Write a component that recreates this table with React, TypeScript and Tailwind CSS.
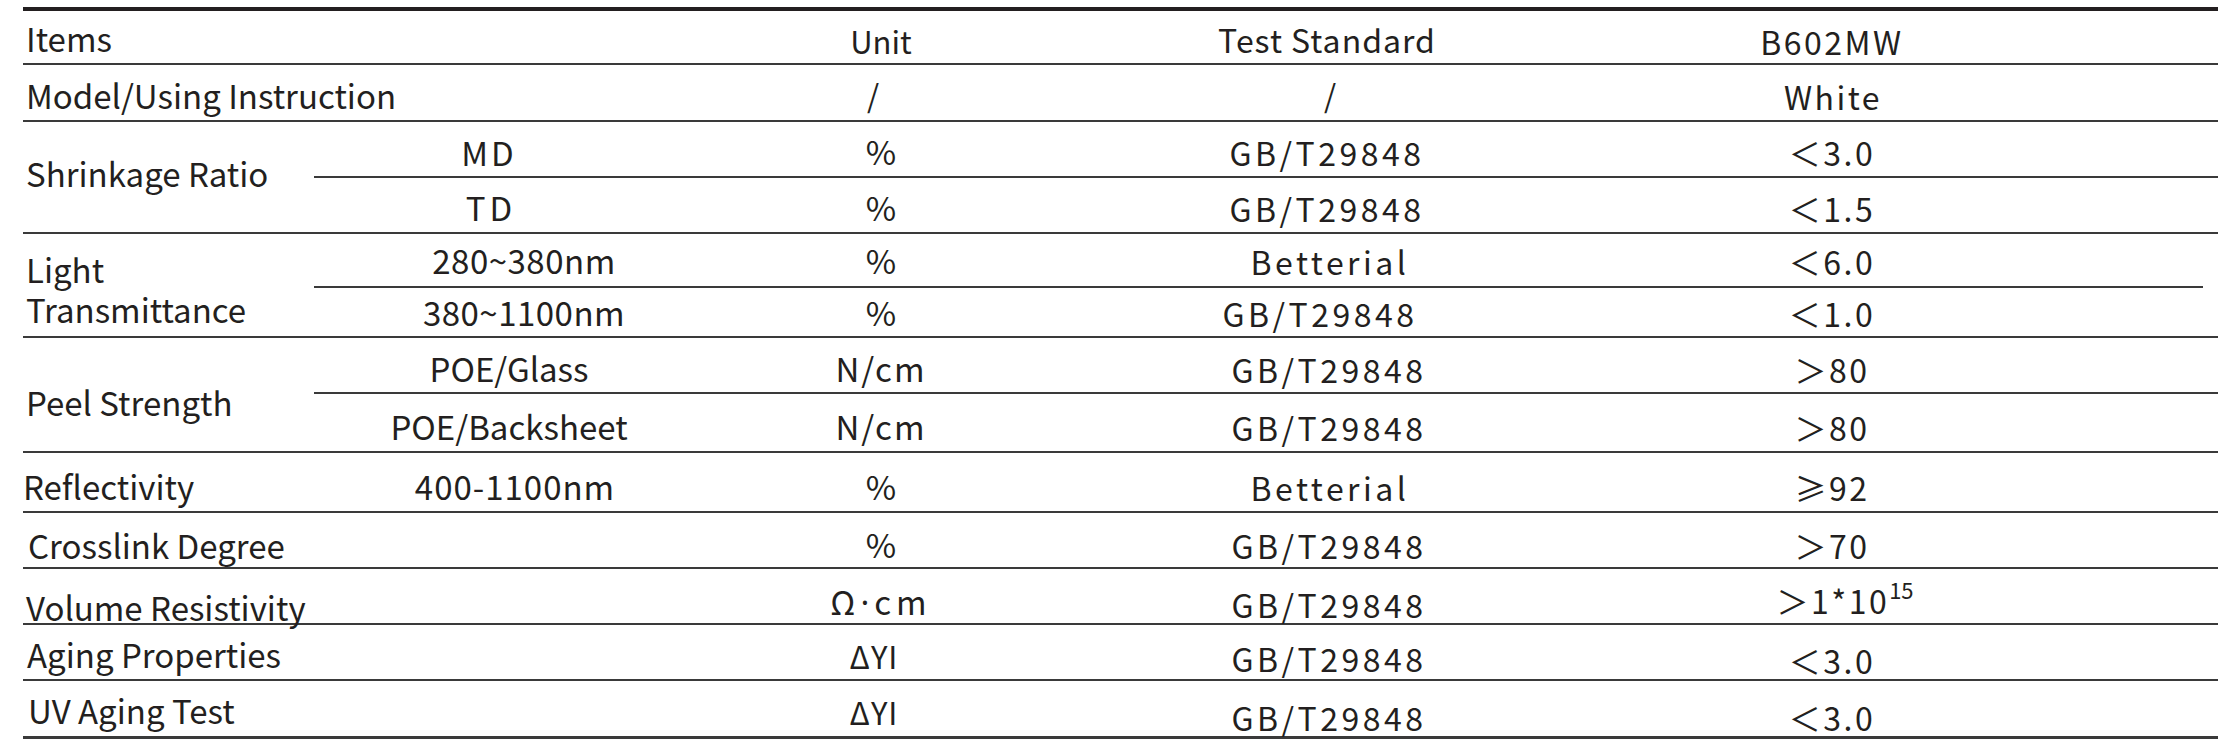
import React from "react";

const F = "font-['Noto_Sans_CJK_SC','Noto_Sans',sans-serif]";

const U = "w-[362px] shrink-0 flex items-center justify-center";
const S = "w-[530px] shrink-0 flex items-center justify-center";
const V = "w-[480px] shrink-0 flex items-center justify-center";
const SUB = "w-[386px] shrink-0 flex items-center justify-center";
const LAB = "w-[291px] shrink-0 flex items-center text-[33px]";
const WIDE = "w-[677px] shrink-0 flex items-center text-[33px]";

const GB = "text-[32px] tracking-[3.5px]";
const VAL = "text-[32px] tracking-[2.5px]";
const PCT = "text-[33px]";
const LT = "＜";
const GT = "＞";

export default function App() {
  return (
    <div className={`w-[2238px] h-[751px] bg-white text-[#231f20] ${F}`}>
      <div className="ml-[23px] w-[2195px] pt-[7px]">
        <div className="h-[4px] bg-[#231f20]" />

        {/* Items */}
        <div className="flex h-[54px] border-b-2 border-[#3a3a3a]">
          <div className={`${WIDE} pl-[3px] pt-[4px]`}>Items</div>
          <div className={`${U} pt-[8px] text-[31px]`}>Unit</div>
          <div className={`${S} pt-[4px] text-[32px] tracking-[1px]`}>Test Standard</div>
          <div className={`${V} pt-[8px] ${VAL}`}>B602MW</div>
          <div className="w-[146px] shrink-0" />
        </div>

        {/* Model */}
        <div className="flex h-[57px] border-b-2 border-[#3a3a3a]">
          <div className={`${WIDE} pl-[3px] pt-[6px]`}>Model/Using Instruction</div>
          <div className={`${U} pr-[16px] pt-[6px] text-[31px]`}>/</div>
          <div className={`${S} pl-[6px] pt-[6px] text-[31px]`}>/</div>
          <div className={`${V} pl-[2px] pt-[6px] ${VAL}`}>White</div>
          <div className="w-[146px] shrink-0" />
        </div>

        {/* Shrinkage */}
        <div className="flex border-b-2 border-[#3a3a3a]">
          <div className={`${LAB} pl-[3px] pb-[6px]`}>Shrinkage Ratio</div>
          <div className="flex flex-col">
            <div className="flex h-[56px] border-b-2 border-[#3a3a3a]">
              <div className={`${SUB} pr-[36px] pt-[8px] text-[33px] tracking-[3px]`}>MD</div>
              <div className={`${U} pt-[6px] ${PCT}`}>%</div>
              <div className={`${S} pt-[6px] ${GB}`}>GB/T29848</div>
              <div className={`${V} pt-[6px] ${VAL}`}>{LT}3.0</div>
              <div className="w-[146px] shrink-0" />
            </div>
            <div className="flex h-[54px]">
              <div className={`${SUB} pr-[32px] pt-[6px] text-[33px] tracking-[4px]`}>TD</div>
              <div className={`${U} pt-[6px] ${PCT}`}>%</div>
              <div className={`${S} pt-[6px] ${GB}`}>GB/T29848</div>
              <div className={`${V} pt-[6px] ${VAL}`}>{LT}1.5</div>
              <div className="w-[146px] shrink-0" />
            </div>
          </div>
        </div>

        {/* Light Transmittance */}
        <div className="flex border-b-2 border-[#3a3a3a]">
          <div className="w-[291px] shrink-0 flex flex-col justify-center pl-[3px] pt-[8px] text-[33px] leading-[40px]">
            <span>Light</span>
            <span>Transmittance</span>
          </div>
          <div className="flex flex-col">
            <div className="flex h-[54px] border-b-2 border-[#3a3a3a] mr-[15px]">
              <div className={`${SUB} pl-[34px] pt-[2px] text-[33px] tracking-[0.5px]`}>280~380nm</div>
              <div className={`${U} pt-[2px] ${PCT}`}>%</div>
              <div className={`${S} pl-[6px] pt-[2px] ${GB}`}>Betterial</div>
              <div className={`${V} pt-[2px] ${VAL}`}>{LT}6.0</div>
              <div className="w-[131px] shrink-0" />
            </div>
            <div className="flex h-[48px]">
              <div className={`${SUB} pl-[34px] pt-[2px] text-[33px] tracking-[0.5px]`}>380~1100nm</div>
              <div className={`${U} pt-[2px] ${PCT}`}>%</div>
              <div className={`${S} pr-[14px] pt-[2px] ${GB}`}>GB/T29848</div>
              <div className={`${V} pt-[2px] ${VAL}`}>{LT}1.0</div>
              <div className="w-[146px] shrink-0" />
            </div>
          </div>
        </div>

        {/* Peel Strength */}
        <div className="flex border-b-2 border-[#3a3a3a]">
          <div className={`${LAB} pl-[3px] pt-[16px]`}>Peel Strength</div>
          <div className="flex flex-col">
            <div className="flex h-[56px] border-b-2 border-[#3a3a3a]">
              <div className={`${SUB} pl-[4px] pt-[8px] text-[33px]`}>POE/Glass</div>
              <div className={`${U} pt-[8px] text-[33px] tracking-[2px]`}>N/cm</div>
              <div className={`${S} pl-[4px] pt-[8px] ${GB}`}>GB/T29848</div>
              <div className={`${V} pt-[8px] ${VAL}`}>{GT}80</div>
              <div className="w-[146px] shrink-0" />
            </div>
            <div className="flex h-[57px]">
              <div className={`${SUB} pl-[4px] pt-[8px] text-[33px]`}>POE/Backsheet</div>
              <div className={`${U} pt-[8px] text-[33px] tracking-[2px]`}>N/cm</div>
              <div className={`${S} pl-[4px] pt-[8px] ${GB}`}>GB/T29848</div>
              <div className={`${V} pt-[8px] ${VAL}`}>{GT}80</div>
              <div className="w-[146px] shrink-0" />
            </div>
          </div>
        </div>

        {/* Reflectivity */}
        <div className="flex h-[60px] border-b-2 border-[#3a3a3a]">
          <div className={`${LAB} pt-[10px]`}>Reflectivity</div>
          <div className={`${SUB} pl-[16px] pt-[10px] text-[33px] tracking-[1px]`}>400-1100nm</div>
          <div className={`${U} pt-[10px] ${PCT}`}>%</div>
          <div className={`${S} pl-[6px] pt-[10px] ${GB}`}>Betterial</div>
          <div className={`${V} pt-[10px] ${VAL}`}>≥92</div>
          <div className="w-[146px] shrink-0" />
        </div>

        {/* Crosslink */}
        <div className="flex h-[56px] border-b-2 border-[#3a3a3a]">
          <div className={`${WIDE} pl-[5px] pt-[12px]`}>Crosslink Degree</div>
          <div className={`${U} pt-[10px] ${PCT}`}>%</div>
          <div className={`${S} pl-[4px] pt-[10px] ${GB}`}>GB/T29848</div>
          <div className={`${V} pt-[10px] ${VAL}`}>{GT}70</div>
          <div className="w-[146px] shrink-0" />
        </div>

        {/* Volume */}
        <div className="flex h-[56px] border-b-2 border-[#3a3a3a]">
          <div className={`${WIDE} pl-[3px] pt-[24px]`}>Volume Resistivity</div>
          <div className={`${U} pt-[12px] text-[33px] tracking-[5px]`}>
            Ω<span className="font-['Noto_Sans',sans-serif]">·</span>cm
          </div>
          <div className={`${S} pl-[4px] pt-[16px] ${GB}`}>GB/T29848</div>
          <div className={`${V} pl-[26px] pt-[8px] ${VAL}`}>
            <span>
              {GT}1*10
              <sup className="text-[22px] tracking-[0px] relative -top-[15px]">15</sup>
            </span>
          </div>
          <div className="w-[146px] shrink-0" />
        </div>

        {/* Aging */}
        <div className="flex h-[56px] border-b-2 border-[#3a3a3a]">
          <div className={`${WIDE} pl-[4px] pt-[6px]`}>Aging Properties</div>
          <div className={`${U} pr-[14px] pt-[8px] text-[31px] tracking-[1px]`}>ΔYI</div>
          <div className={`${S} pl-[4px] pt-[12px] ${GB}`}>GB/T29848</div>
          <div className={`${V} pt-[16px] ${VAL}`}>{LT}3.0</div>
          <div className="w-[146px] shrink-0" />
        </div>

        {/* UV */}
        <div className="flex h-[58px] border-b-[3px] border-[#3a3a3a]">
          <div className={`${WIDE} pl-[5px] pt-[5px]`}>UV Aging Test</div>
          <div className={`${U} pr-[14px] pt-[8px] text-[31px] tracking-[1px]`}>ΔYI</div>
          <div className={`${S} pl-[4px] pt-[17px] ${GB}`}>GB/T29848</div>
          <div className={`${V} pt-[16px] ${VAL}`}>{LT}3.0</div>
          <div className="w-[146px] shrink-0" />
        </div>
      </div>
    </div>
  );
}
